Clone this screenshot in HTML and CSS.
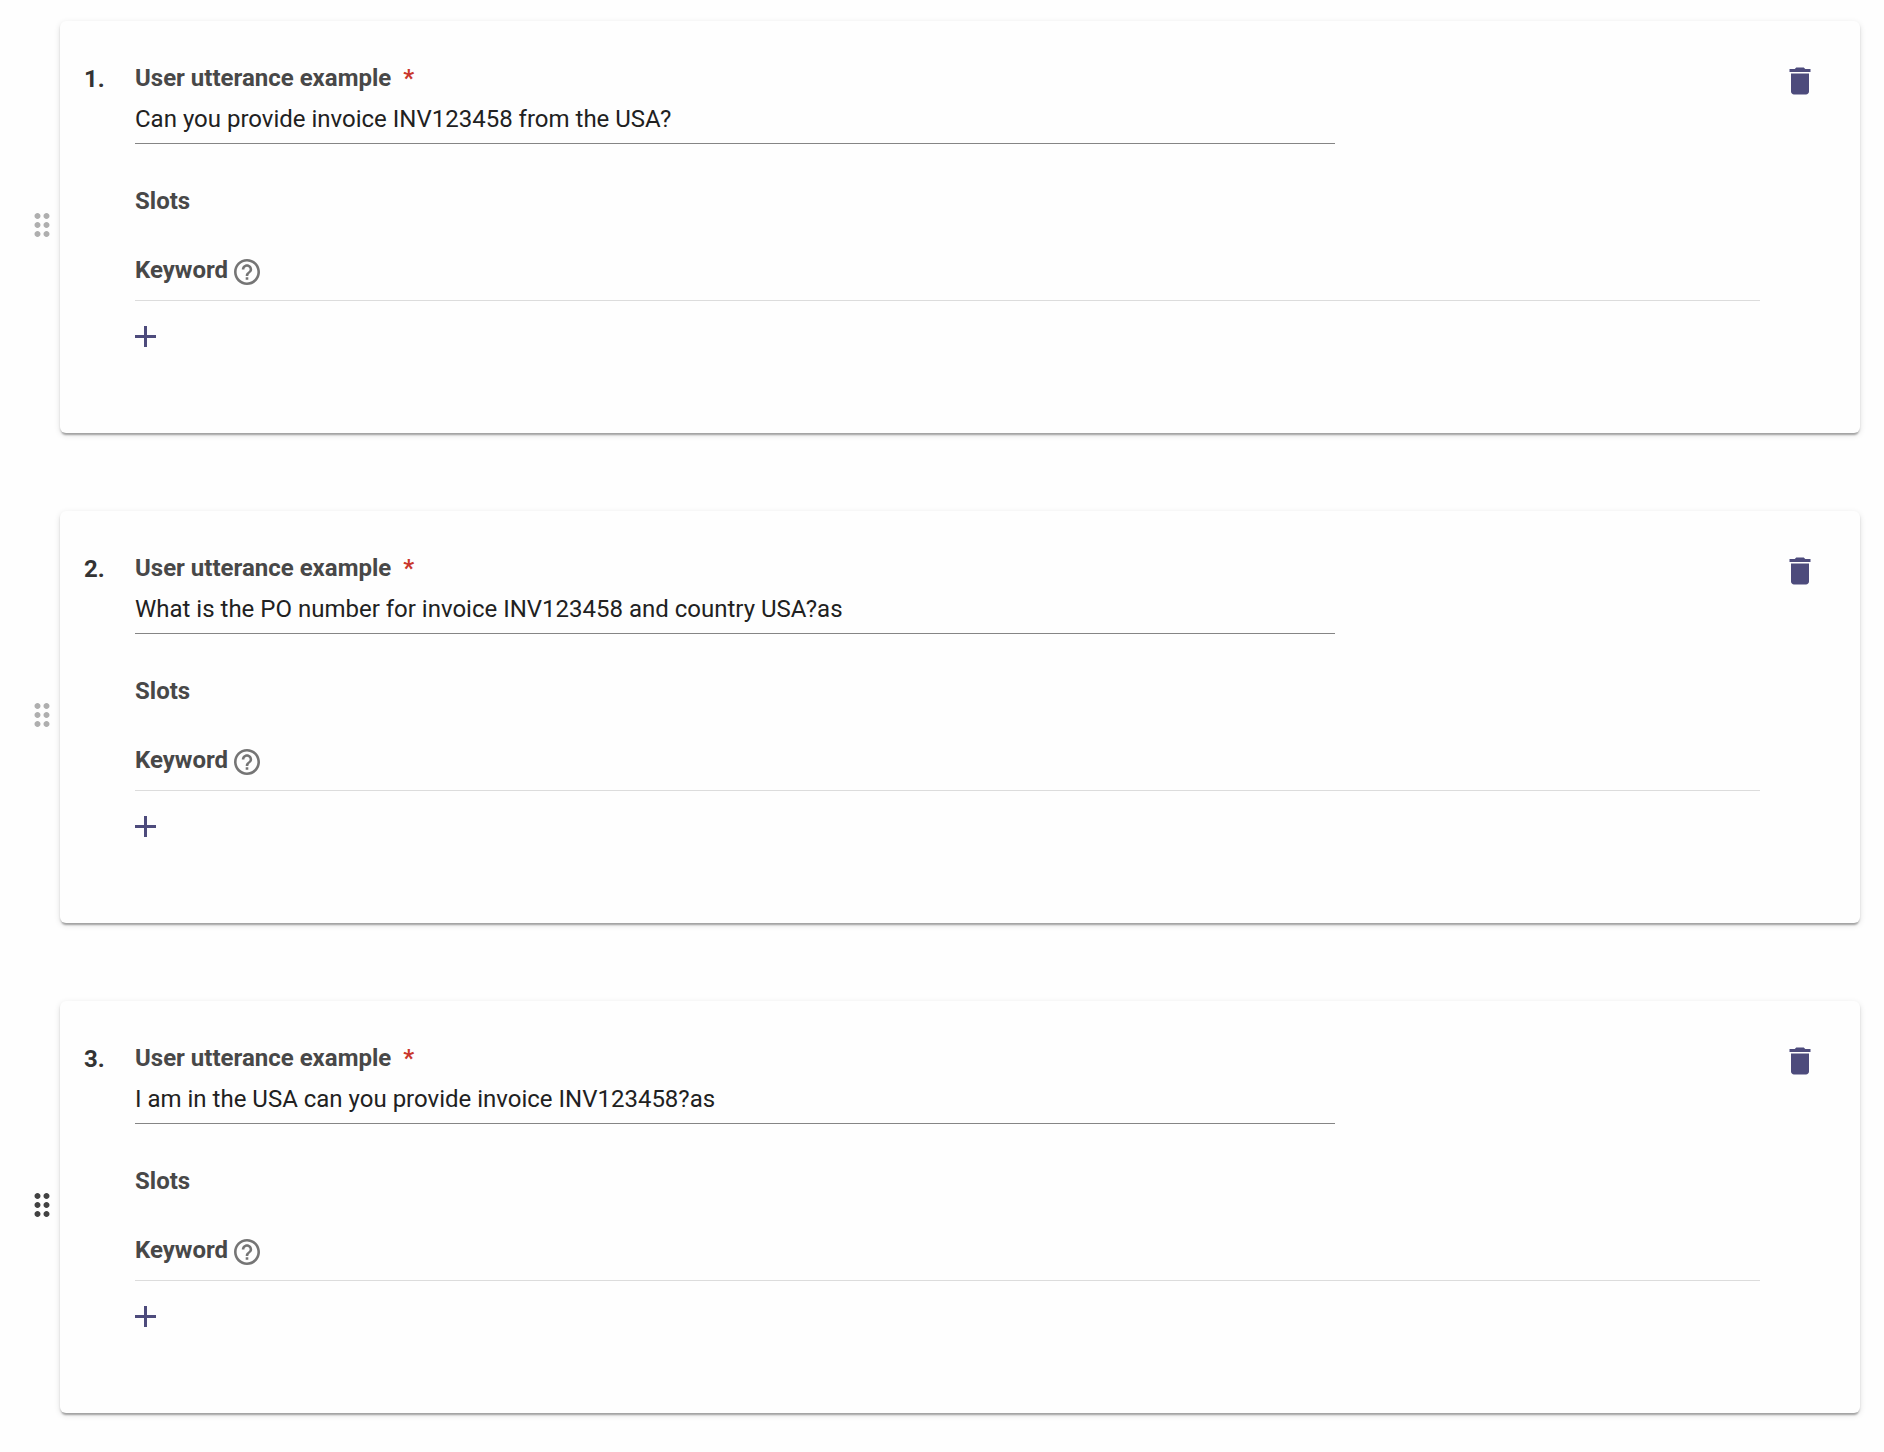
FILE: index.html
```html
<!DOCTYPE html>
<html lang="en">

<head>
    <meta charset="UTF-8">
    <meta name="viewport" content="width=device-width, initial-scale=1.0">
    <title>User utterances</title>
    <link rel="stylesheet" href="styles.css">
</head>

<body>
    <!-- shared icons -->
    <svg class="icon-defs" aria-hidden="true">
        <symbol id="icon-drag" viewBox="0 0 24 24">
            <path d="M11 18c0 1.1-.9 2-2 2s-2-.9-2-2 .9-2 2-2 2 .9 2 2zm-2-8c-1.1 0-2 .9-2 2s.9 2 2 2 2-.9 2-2-.9-2-2-2zm0-6c-1.1 0-2 .9-2 2s.9 2 2 2 2-.9 2-2-.9-2-2-2zm6 4c1.1 0 2-.9 2-2s-.9-2-2-2-2 .9-2 2 .9 2 2 2zm0 2c-1.1 0-2 .9-2 2s.9 2 2 2 2-.9 2-2-.9-2-2-2zm0 6c-1.1 0-2 .9-2 2s.9 2 2 2 2-.9 2-2-.9-2-2-2z"/>
        </symbol>
        <symbol id="icon-help" viewBox="2 2 20 20">
            <path d="M11 18h2v-2h-2v2zm1-16C6.48 2 2 6.48 2 12s4.480 10 10 10 10-4.480 10-10S17.520 2 12 2zm0 18c-4.410 0-8-3.590-8-8s3.590-8 8-8 8 3.590 8 8-3.590 8-8 8zm0-14c-2.210 0-4 1.790-4 4h2c0-1.100.9-2 2-2s2 .9 2 2c0 2-3 1.750-3 5h2c0-2.250 3-2.500 3-5 0-2.210-1.790-4-4-4z"/>
        </symbol>
        <symbol id="icon-add" viewBox="5 5 14 14">
            <path d="M19 13h-6v6h-2v-6H5v-2h6V5h2v6h6v2z"/>
        </symbol>
        <symbol id="icon-delete" viewBox="0 0 24 24">
            <path d="M6 19c0 1.100.9 2 2 2h8c1.100 0 2-.9 2-2V7H6v12zM19 4h-3.500l-1-1h-5l-1 1H5v2h14V4z"/>
        </symbol>
    </svg>

    <main class="utterances">
        <div class="utterance">
            <button type="button" class="drag" aria-label="Reorder utterance 1"><svg><use href="#icon-drag"/></svg></button>
            <section class="card">
                <span class="number">1.</span>
                <div class="content">
                    <label for="utterance-1">User utterance example <span class="required">*</span></label>
                    <input type="text" id="utterance-1" value="Can you provide invoice INV123458 from the USA?" required>
                    <h3 class="slots">Slots</h3>
                    <div class="keyword">
                        <h3>Keyword</h3>
                        <button type="button" class="help" aria-label="Keyword help"><svg><use href="#icon-help"/></svg></button>
                    </div>
                    <button type="button" class="add" aria-label="Add keyword"><svg><use href="#icon-add"/></svg></button>
                </div>
                <button type="button" class="delete" aria-label="Delete utterance 1"><svg><use href="#icon-delete"/></svg></button>
            </section>
        </div>

        <div class="utterance">
            <button type="button" class="drag" aria-label="Reorder utterance 2"><svg><use href="#icon-drag"/></svg></button>
            <section class="card">
                <span class="number">2.</span>
                <div class="content">
                    <label for="utterance-2">User utterance example <span class="required">*</span></label>
                    <input type="text" id="utterance-2" value="What is the PO number for invoice INV123458 and country USA?as" required>
                    <h3 class="slots">Slots</h3>
                    <div class="keyword">
                        <h3>Keyword</h3>
                        <button type="button" class="help" aria-label="Keyword help"><svg><use href="#icon-help"/></svg></button>
                    </div>
                    <button type="button" class="add" aria-label="Add keyword"><svg><use href="#icon-add"/></svg></button>
                </div>
                <button type="button" class="delete" aria-label="Delete utterance 2"><svg><use href="#icon-delete"/></svg></button>
            </section>
        </div>

        <div class="utterance">
            <button type="button" class="drag active" aria-label="Reorder utterance 3"><svg><use href="#icon-drag"/></svg></button>
            <section class="card">
                <span class="number">3.</span>
                <div class="content">
                    <label for="utterance-3">User utterance example <span class="required">*</span></label>
                    <input type="text" id="utterance-3" value="I am in the USA can you provide invoice INV123458?as" required>
                    <h3 class="slots">Slots</h3>
                    <div class="keyword">
                        <h3>Keyword</h3>
                        <button type="button" class="help" aria-label="Keyword help"><svg><use href="#icon-help"/></svg></button>
                    </div>
                    <button type="button" class="add" aria-label="Add keyword"><svg><use href="#icon-add"/></svg></button>
                </div>
                <button type="button" class="delete" aria-label="Delete utterance 3"><svg><use href="#icon-delete"/></svg></button>
            </section>
        </div>
    </main>
</body>

</html>
```
FILE: styles.css
```css
* {
  box-sizing: border-box;
}
body {
  margin: 0;
  background-color: #fefefe;
  color: #212121;
  font-family: Roboto, Arial, sans-serif;
  font-size: 24px;
  line-height: 28px;
}
button {
  display: flex;
  flex-shrink: 0;
  padding: 0;
  border: none;
  background: none;
  cursor: pointer;
}
svg {
  display: block;
  width: 36px;
  height: 36px;
  fill: currentColor;
}
.icon-defs {
  display: none;
}
.utterances {
  display: flex;
  flex-direction: column;
  gap: 78px;
  padding: 21px 24px;
}
.utterance {
  display: flex;
  align-items: center;
}
.drag {
  padding-bottom: 4px;
  color: #afafaf;
  cursor: grab;
}
.drag.active {
  color: #424242;
}
.card {
  flex: 1;
  display: flex;
  align-items: flex-start;
  padding: 42px 42px 86px 24px;
  border-radius: 6px;
  background-color: #fefefe;
  box-shadow: 0 4px 2px -2px rgba(0, 0, 0, 0.2), 0 2px 2px rgba(0, 0, 0, 0.14), 0 2px 6px rgba(0, 0, 0, 0.12);
}
.number {
  flex: 0 0 51px;
  color: #333;
  font-weight: bold;
  line-height: 32px;
}
.content {
  flex: 1;
  margin-right: 22px;
}
label, h3 {
  display: block;
  margin: 0;
  color: #484848;
  font-size: 24px;
  font-weight: bold;
}
label {
  line-height: 30px;
}
.required {
  margin-left: 6px;
  color: #c9372c;
}
input {
  display: block;
  width: 100%;
  max-width: 1200px;
  padding: 12px 0 10px;
  border: none;
  border-bottom: 1px solid #858585;
  border-radius: 0;
  outline: none;
  background: none;
  color: #212121;
  font: inherit;
}
.slots {
  margin: 43px 0 41px;
}
.keyword {
  display: flex;
  align-items: flex-start;
  padding-bottom: 15px;
  border-bottom: 1px solid #dcdcdc;
}
.help {
  margin-left: 6px;
  padding-top: 3px;
  color: #757575;
}
.help svg {
  width: 26px;
  height: 26px;
}
.add {
  margin-top: 25px;
  color: #4d4b7c;
}
.add svg {
  width: 21px;
  height: 21px;
}
.delete {
  color: #4d4b7c;
}
```
